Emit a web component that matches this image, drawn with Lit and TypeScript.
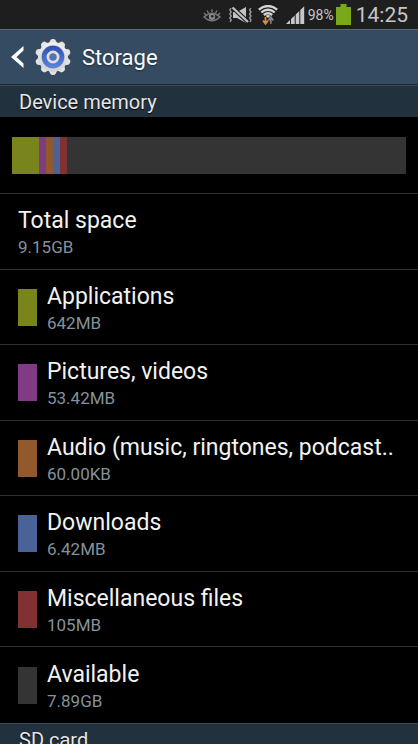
import { LitElement, html, css, svg } from "lit";
import { customElement } from "lit/decorators.js";
import { styleMap } from "lit/directives/style-map.js";

interface Entry {
  name: string;
  size: string;
  color?: string;
  share?: number;
}

const ENTRIES: Entry[] = [
  { name: "Total space", size: "9.15GB" },
  { name: "Applications", size: "642MB", color: "#7a841c", share: 27 },
  { name: "Pictures, videos", size: "53.42MB", color: "#7f3b83", share: 7 },
  { name: "Audio (music, ringtones, podcast..", size: "60.00KB", color: "#92592d", share: 7 },
  { name: "Downloads", size: "6.42MB", color: "#496298", share: 7 },
  { name: "Miscellaneous files", size: "105MB", color: "#813132", share: 7 },
  { name: "Available", size: "7.89GB", color: "#343434", share: 339 },
];

const TEETH = Array.from({ length: 10 }, (_, i) => i * 36);

@customElement("status-bar")
class StatusBar extends LitElement {
  static styles = css`
    :host {
      display: flex;
      align-items: center;
      justify-content: flex-end;
      height: 29px;
      padding-right: 10px;
      background: #1e1e1e;
      color: #c6c6c6;
    }
    svg { display: block; flex: none; }
    .eye { margin-right: 8px; }
    .mute { margin-right: 6px; }
    .wifi { margin-right: 8px; }
    .signal { margin-right: 3px; }
    .percent { font-size: 14px; margin-right: 2px; }
    .battery { margin-right: 5px; }
    .time { font-size: 21px; }
  `;

  render() {
    return html`
      <svg class="eye" width="18" height="14" viewBox="0 0 18 14" fill="none" stroke="#777">
        <path d="M1 9Q9 1.500 17 9Q9 16.500 1 9Z" stroke-width="1.500" />
        <circle cx="9" cy="8.800" r="3.200" fill="#858585" stroke="none" />
        <circle cx="9.300" cy="8.300" r="1.200" fill="#1e1e1e" stroke="none" />
        <path d="M9 4V1.200M5.500 5L4 2.500M12.500 5L14 2.500M2.800 6.800L1 5M15.200 6.800L17 5" stroke-width="1.400" />
      </svg>
      <svg class="mute" width="23" height="16" viewBox="0 0 23 16">
        <path d="M4 5H8L17 0V16L8 11H4Z" fill="#c2c2c2" />
        <path d="M3.500 .5L19 15" stroke="#1e1e1e" stroke-width="4.400" />
        <path d="M3.500 .5L19 15" stroke="#c2c2c2" stroke-width="2.200" />
        <path d="M2 1L.8 3L2.200 5L.8 7L2.200 9L.8 11L2.200 13L1 15M21.800 1L20.600 3L22 5L20.600 7L22 9L20.600 11L22 13L21 15" fill="none" stroke="#999" stroke-width="1.400" />
      </svg>
      <svg class="wifi" width="20" height="20" viewBox="0 0 20 20">
        <path d="M.8 4.600Q10-2.600 19.200 4.600M3.300 7.400Q10 2 16.700 7.400M5.800 10Q10 6.600 14.200 10" fill="none" stroke="#d4d4d4" stroke-width="2.300" />
        <path d="M7.500 10.800Q10 9.400 12.500 10.800L10 13Z" fill="#d4d4d4" />
        <path d="M7.500 12V18.500M5 15.500L7.500 18.800L10 15.500" fill="none" stroke="#e58a24" stroke-width="1.800" />
        <path d="M12.800 18.800V12.500M10.500 15.500L12.800 12L15.200 15.500" fill="none" stroke="#898989" stroke-width="1.600" />
      </svg>
      <svg class="signal" width="19" height="18" viewBox="0 0 19 18" fill="#c8c8c8">
        <path d="M0 18L4 14V18ZM5 18V13L8.700 9.400V18ZM9.700 18V8.500L13.300 5V18ZM14.300 18V4L18.200 .2V18Z" />
      </svg>
      <span class="percent">98%</span>
      <svg class="battery" width="15" height="21" viewBox="0 0 15 21">
        <path d="M0 3H4.500V0H10.500V3H15V21H0Z" fill="#79a81b" />
      </svg>
      <span class="time">14:25</span>
    `;
  }
}

@customElement("title-bar")
class TitleBar extends LitElement {
  static styles = css`
    :host {
      display: block;
      box-sizing: border-box;
      height: 56px;
      border-top: 1px solid #566779;
      border-bottom: 1px solid #1d2833;
      background: #344b61;
    }
    .back {
      display: flex;
      align-items: center;
      gap: 10px;
      height: 100%;
      padding: 0 0 0 11px;
      border: 0;
      background: none;
      color: #fafafa;
      font-family: inherit;
    }
    svg { display: block; flex: none; }
    .heading {
      margin: 0;
      font-size: 22px;
      font-weight: 400;
      text-shadow: 0 1px 2px #1b2a38;
    }
  `;

  render() {
    return html`
      <button class="back" aria-label="Back">
        <svg width="13" height="22" viewBox="0 0 13 22">
          <path d="M12.500 0V4.500L5.500 11L12.500 17.500V22L0 11Z" fill="#fff" />
        </svg>
        <svg width="38" height="38" viewBox="-19 -19 38 38">
          <defs>
            <linearGradient id="rim" x1="0" y1="0" x2="0" y2="1">
              <stop offset="0" stop-color="#f0f0f0" />
              <stop offset="1" stop-color="#d4d3d2" />
            </linearGradient>
            <linearGradient id="face" x1="0" y1="0" x2="0" y2="1">
              <stop offset="0" stop-color="#2f4fae" />
              <stop offset="1" stop-color="#5b86e0" />
            </linearGradient>
          </defs>
          ${TEETH.map(
            (a) => svg`<path d="M-4.500-13L-2.500-17Q-2-18 0-18T2.500-17L4.500-13Z" fill="#e4e3e2" transform="rotate(${a})" />`,
          )}
          <circle r="15" fill="url(#rim)" />
          <circle r="11.700" fill="#a9b2cc" />
          <circle r="11.200" fill="url(#face)" />
          <circle r="5" fill="none" stroke="#dedede" stroke-width="3" />
          <circle r="3.500" fill="#5574b4" />
        </svg>
        <h1 class="heading">Storage</h1>
      </button>
    `;
  }
}

@customElement("app-root")
class AppRoot extends LitElement {
  static styles = css`
    :host {
      display: block;
      height: 100vh;
      overflow: hidden;
      background: #000;
      color: #f2f2f2;
      font-family: Roboto, "Noto Sans", sans-serif;
    }
    .section {
      box-sizing: border-box;
      height: 32px;
      margin: 0;
      padding-left: 19px;
      border-top: 1px solid #3a4956;
      background: #22313e;
      color: #e6e6e6;
      font-size: 20px;
      font-weight: 400;
      line-height: 32px;
      text-shadow: 0 1px 1px #000;
    }
    .usage {
      padding: 20px 12px 19px;
      border-bottom: 1px solid #303030;
    }
    .bar { display: flex; height: 37px; }
    .entries { margin: 0; padding: 0; list-style: none; }
    .entry {
      display: flex;
      align-items: center;
      gap: 10px;
      box-sizing: border-box;
      height: 76px;
      padding: 0 18px;
      border-bottom: 1px solid #303030;
    }
    .entry:nth-child(even) { height: 75px; }
    .entry:last-child { border-bottom: 0; }
    .swatch { flex: none; width: 19px; height: 37px; }
    .name {
      font-size: 23px;
      line-height: 32px;
      white-space: nowrap;
    }
    .size {
      color: #84929b;
      font-size: 17px;
      line-height: 21px;
    }
  `;

  render() {
    return html`
      <status-bar></status-bar>
      <title-bar></title-bar>
      <h2 class="section">Device memory</h2>
      <div class="usage">
        <div class="bar">
          ${ENTRIES.filter((e) => e.share).map(
            (e) => html`<div style=${styleMap({ flex: `${e.share} 0 0`, background: e.color })}></div>`,
          )}
        </div>
      </div>
      <ul class="entries">
        ${ENTRIES.map(
          (e) => html`
            <li class="entry">
              ${e.color ? html`<div class="swatch" style=${styleMap({ background: e.color })}></div>` : null}
              <div>
                <div class="name">${e.name}</div>
                <div class="size">${e.size}</div>
              </div>
            </li>
          `,
        )}
      </ul>
      <h2 class="section">SD card</h2>
    `;
  }
}
